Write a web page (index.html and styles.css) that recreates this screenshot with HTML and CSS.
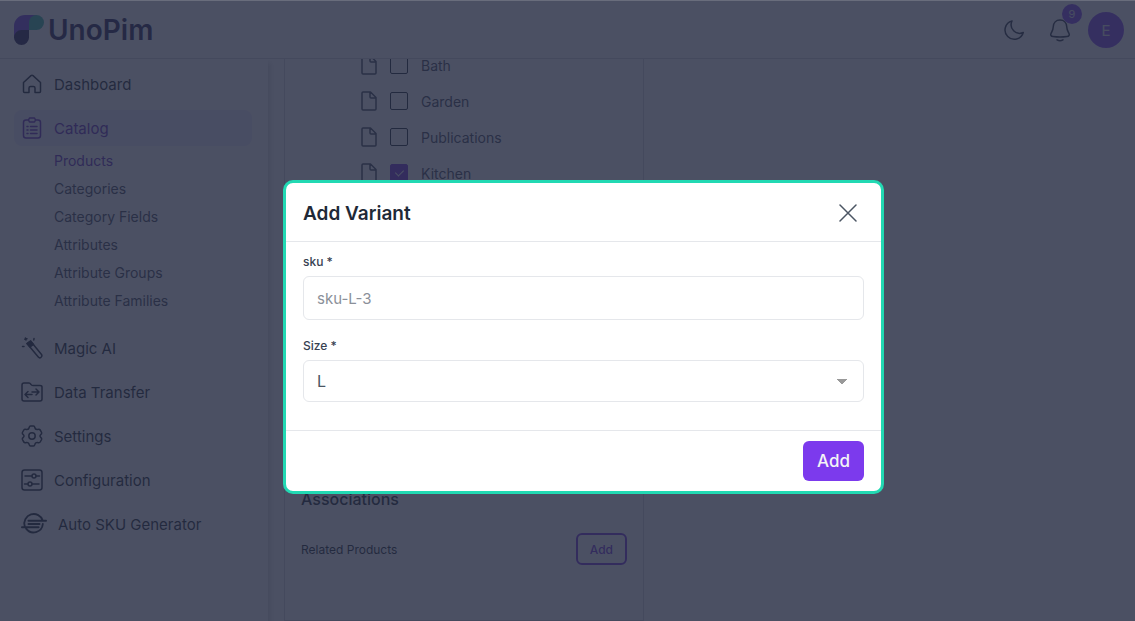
FILE: index.html
```html
<!DOCTYPE html>
<html lang="en">
<head>
  <meta charset="UTF-8" />
  <meta name="viewport" content="width=device-width, initial-scale=1" />
  <title>UnoPim</title>
  <link rel="stylesheet" href="styles.css">
</head>
<body>
  <!-- Header -->
  <header class="header">
    <a href="#" class="logo">
      <svg width="31" height="31" viewBox="0 0 31 31">
        <path d="M0 23V11A11 11 0 0 1 11 0H23V15H15V23Z" fill="#7038e0"/>
        <path d="M15 15V7.500A7.500 7.500 0 0 1 30 7.500A7.500 7.500 0 0 1 22.500 15Z" fill="#2bb3a0"/>
        <path d="M15 15V22.500A7.500 7.500 0 0 1 0 22.500A7.500 7.500 0 0 1 7.500 15Z" fill="#1b1248"/>
      </svg>
      <span class="logo-text">UnoPim</span>
    </a>
    <div class="header-actions">
      <button type="button" class="icon-button" aria-label="Dark mode">
        <svg width="24" height="24" viewBox="0 0 24 24"><path d="M10 3A9.300 9.300 0 1 0 21.300 14.500A8.600 8.600 0 0 1 10 3Z"/></svg>
      </button>
      <button type="button" class="icon-button" aria-label="Notifications">
        <svg width="24" height="24" viewBox="0 0 24 24"><path d="M12 2C7.800 2 5.500 5 5.300 8.500C5.100 12 4.500 12.500 3 15.500C2.300 17 3 18.300 5 18.500Q12 19.500 19 18.500C21 18.300 21.700 17 21 15.500C19.500 12.500 18.900 12 18.700 8.500C18.500 5 16.200 2 12 2ZM9 21.800Q12 23.600 15 21.800"/></svg>
        <span class="badge">9</span>
      </button>
      <button type="button" class="avatar">E</button>
    </div>
  </header>

  <div class="page">
    <!-- Sidebar -->
    <nav class="sidebar">
      <a href="#" class="nav-item">
        <svg width="20" height="20" viewBox="0 0 20 20"><path d="M1.500 8.500L9 1.600Q10 .8 11 1.600L18.500 8.500V17.500Q18.500 18.500 17.500 18.500H13V14Q13 12.500 11.500 12.500H8.500Q7 12.500 7 14V18.500H2.500Q1.500 18.500 1.500 17.500Z"/></svg>
        Dashboard
      </a>
      <div class="nav-group">
        <a href="#" class="nav-item active">
          <svg width="20" height="22" viewBox="0 0 20 22"><path d="M6 3H4Q1.500 3 1.500 5.500V18.500Q1.500 21 4 21H16Q18.500 21 18.500 18.500V5.500Q18.500 3 16 3H14M7.500 1H12.500L13.500 3L12.500 5H7.500L6.500 3ZM5 9.500H6M8.500 9.500H15M5 13H6M8.500 13H15M5 16.500H6M8.500 16.500H15"/></svg>
          Catalog
        </a>
        <div class="submenu">
          <a href="#" class="active">Products</a>
          <a href="#">Categories</a>
          <a href="#">Category Fields</a>
          <a href="#">Attributes</a>
          <a href="#">Attribute Groups</a>
          <a href="#">Attribute Families</a>
        </div>
      </div>
      <a href="#" class="nav-item">
        <svg width="20" height="22" viewBox="0 0 20 22"><path d="M5 6.500L8.500 4L19.500 17.500Q20.500 19 19 20.300Q17.500 21.500 16.300 20Z"/><path class="solid" d="M5 6.500L8.500 4L11.500 7.500L8 10Z"/><path d="M3.500 1L4 3M2.800 2.200L5 1.700M12 1.500L11.800 3M.5 9.500H2"/></svg>
        Magic AI
      </a>
      <a href="#" class="nav-item">
        <svg width="22" height="20" viewBox="0 0 22 20"><path d="M1 3Q1 1 3 1H8Q9 1 10 2.500Q10.500 3.500 12 3.500H19Q21 3.500 21 5V17Q21 19 19 19H3Q1 19 1 17ZM4 12.500H11M7 9.500L4 12.500L7 15.500M11 10H18M15 7L18 10L15 13"/></svg>
        Data Transfer
      </a>
      <a href="#" class="nav-item">
        <svg width="22" height="22" viewBox="0 0 22 22"><circle cx="11" cy="11" r="3.200"/><path d="M9.500 1H12.500Q13.500 1 13.800 2.500Q14.200 4.800 16.500 4.500Q18.500 3.800 19.200 5L20.600 7.500Q21 8.800 19.800 9.500Q18.200 11 19.800 12.500Q21 13.200 20.600 14.500L19.200 17Q18.500 18.200 16.500 17.500Q14.200 17.200 13.800 19.500Q13.500 21 12.500 21H9.500Q8.500 21 8.200 19.500Q7.800 17.200 5.500 17.500Q3.500 18.200 2.800 17L1.400 14.500Q1 13.200 2.200 12.500Q3.800 11 2.200 9.500Q1 8.800 1.400 7.500L2.800 5Q3.500 3.800 5.500 4.500Q7.800 4.800 8.200 2.500Q8.500 1 9.500 1Z"/></svg>
        Settings
      </a>
      <a href="#" class="nav-item">
        <svg width="22" height="22" viewBox="0 0 22 22"><rect x="1" y="1" width="20" height="20" rx="2.500"/><circle cx="13" cy="7" r="2"/><circle cx="9" cy="15" r="2"/><path d="M4 7H11M15 7H18.500M3.500 15H7M11 15H18"/></svg>
        Configuration
      </a>
      <a href="#" class="nav-item">
        <svg class="bold" width="26" height="24" viewBox="0 0 28 24"><path d="M4 14.500A10 10 0 1 1 23.500 8.500M23.500 12A10 10 0 0 1 5.500 17M8 8.500H27M8 12H20M1 15.500H19"/></svg>
        Auto SKU Generator
      </a>
    </nav>

    <!-- Product edit -->
    <main class="content">
      <section class="panel">
        <ul class="tree">
          <li>
            <svg width="16" height="20" viewBox="0 0 16 20"><path d="M1 2Q1 1 2 1H9.500L15 6.500V18Q15 19 14 19H2Q1 19 1 18ZM9 1V6Q9 7 10 7H15"/></svg>
            <label><input type="checkbox"> Bath</label>
          </li>
          <li>
            <svg width="16" height="20" viewBox="0 0 16 20"><path d="M1 2Q1 1 2 1H9.500L15 6.500V18Q15 19 14 19H2Q1 19 1 18ZM9 1V6Q9 7 10 7H15"/></svg>
            <label><input type="checkbox"> Garden</label>
          </li>
          <li>
            <svg width="16" height="20" viewBox="0 0 16 20"><path d="M1 2Q1 1 2 1H9.500L15 6.500V18Q15 19 14 19H2Q1 19 1 18ZM9 1V6Q9 7 10 7H15"/></svg>
            <label><input type="checkbox"> Publications</label>
          </li>
          <li>
            <svg width="16" height="20" viewBox="0 0 16 20"><path d="M1 2Q1 1 2 1H9.500L15 6.500V18Q15 19 14 19H2Q1 19 1 18ZM9 1V6Q9 7 10 7H15"/></svg>
            <label><input type="checkbox" checked> Kitchen</label>
          </li>
        </ul>
      </section>
      <section class="panel associations">
        <h3>Associations</h3>
        <div class="association">
          <span>Related Products</span>
          <button type="button" class="secondary-button">Add</button>
        </div>
      </section>
    </main>
  </div>

  <!-- Add Variant modal -->
  <div class="overlay">
    <form class="modal" role="dialog" aria-labelledby="modalTitle">
      <div class="modal-header">
        <h2 id="modalTitle">Add Variant</h2>
        <button type="button" class="close-button" aria-label="Close">
          <svg width="18" height="18" viewBox="0 0 18 18"><path d="M1 1L17 17M17 1L1 17"/></svg>
        </button>
      </div>
      <div class="modal-body">
        <div class="field">
          <label for="sku">sku *</label>
          <input type="text" id="sku" name="sku" value="sku-L-3" required />
        </div>
        <div class="field">
          <label for="size">Size *</label>
          <select id="size" name="size" required>
            <option>L</option>
          </select>
        </div>
      </div>
      <div class="modal-footer">
        <button type="submit" class="primary-button">Add</button>
      </div>
    </form>
  </div>
</body>
</html>
```
FILE: styles.css
```css
* {
  box-sizing: border-box;
}

body {
  margin: 0;
  height: 100vh;
  display: flex;
  flex-direction: column;
  overflow: hidden;
  font-family: Inter, sans-serif;
  font-size: 14px;
  color: #374151;
  background: white;
}

a {
  color: inherit;
  text-decoration: none;
}

button {
  font-family: inherit;
  cursor: pointer;
}

svg {
  flex-shrink: 0;
  fill: none;
  stroke: currentColor;
  stroke-width: 1.5;
  stroke-linecap: round;
  stroke-linejoin: round;
}

svg .solid {
  fill: currentColor;
}

svg.bold {
  stroke-width: 2;
}

.header {
  display: flex;
  justify-content: space-between;
  align-items: center;
  height: 59px;
  flex-shrink: 0;
  padding: 2px 11px 0 14px;
  border-bottom: 1px solid #d1d5db;
  background: white;
  position: relative;
  z-index: 1;
}

.logo {
  display: flex;
  align-items: center;
  gap: 3px;
}

.logo svg {
  stroke: none;
}

.logo-text {
  font-size: 28px;
  line-height: 32px;
  font-weight: 600;
  color: #1b1248;
}

.header-actions {
  display: flex;
  align-items: center;
  gap: 16px;
}

.icon-button {
  position: relative;
  display: flex;
  padding: 0;
  margin-right: 6px;
  border: none;
  background: none;
  color: #1f2937;
}

.icon-button + .avatar {
  margin-left: -6px;
}

.badge {
  position: absolute;
  top: -14px;
  left: 14px;
  width: 20px;
  height: 20px;
  border-radius: 50%;
  background: #7c3aed;
  color: #e5e7eb;
  font-size: 11px;
  line-height: 20px;
}

.avatar {
  width: 36px;
  height: 36px;
  padding: 0;
  border: none;
  border-radius: 50%;
  background: #7c3aed;
  color: #e5e7eb;
  font-size: 15px;
}

.page {
  flex: 1;
  min-height: 0;
  display: flex;
}

.sidebar {
  width: 268px;
  flex-shrink: 0;
  display: flex;
  flex-direction: column;
  gap: 8px;
  padding: 7px 16px 8px 14px;
  box-shadow: 2px 4px 6px rgba(0, 0, 0, 0.2);
}

.nav-item {
  display: flex;
  align-items: center;
  gap: 11px;
  height: 36px;
  padding: 0 7px;
  border-radius: 8px;
  font-size: 15px;
  color: #111827;
}

.nav-item svg {
  min-width: 22px;
}

.nav-item.active {
  background: #ede9fe;
  color: #5b21b6;
}

.submenu {
  display: flex;
  flex-direction: column;
  padding: 1px 0 7px 40px;
}

.submenu a {
  line-height: 28px;
}

.submenu a.active {
  color: #5b21b6;
}

/* scrolled to the end of the column */
.content {
  flex: 1;
  display: flex;
  flex-direction: column;
  justify-content: flex-end;
  gap: 8px;
  padding-left: 16px;
  overflow: hidden;
}

.panel {
  width: 360px;
  flex-shrink: 0;
  padding: 0 16px;
  border: 1px solid #d1d5db;
}

.tree {
  list-style: none;
  height: 427px;
  margin: 0;
  padding: 0 0 0 60px;
}

.tree li {
  display: flex;
  align-items: center;
  gap: 13px;
  height: 36px;
}

.tree label {
  display: flex;
  align-items: center;
  gap: 13px;
}

.tree input {
  appearance: none;
  width: 18px;
  height: 18px;
  margin: 0;
  border: 1px solid #111827;
  border-radius: 2px;
}

.tree input:checked {
  display: flex;
  justify-content: center;
  border-color: #6d28d9;
  background: #6d28d9;
}

.tree input:checked::before {
  content: "";
  width: 4px;
  height: 7px;
  margin-top: 3px;
  border: solid white;
  border-width: 0 1px 1px 0;
  transform: rotate(45deg);
}

.associations {
  height: 138px;
}

.associations h3 {
  margin: 3px 0 22px;
  font-size: 16px;
  line-height: 24px;
  font-weight: 500;
  color: #111827;
}

.association {
  display: flex;
  justify-content: space-between;
  align-items: center;
  font-size: 12px;
  color: #111827;
}

.secondary-button {
  height: 32px;
  padding: 0 12px;
  border: 2px solid #6d28d9;
  border-radius: 6px;
  background: white;
  color: #6d28d9;
  font-size: 12px;
  font-weight: 500;
}

.overlay {
  position: fixed;
  inset: 0;
  z-index: 2;
  display: flex;
  justify-content: center;
  align-items: center;
  padding: 52px 0 0 32px;
  border-top: 1px solid #696d7c;
  background: rgba(39, 45, 68, 0.835);
}

.modal {
  width: 601px;
  max-width: 100%;
  border: 3px solid #22d9b3;
  border-radius: 10px;
  background: white;
}

.modal-header {
  display: flex;
  justify-content: space-between;
  align-items: center;
  height: 59px;
  padding: 2px 24px 0 17px;
  border-bottom: 1px solid #e5e7eb;
}

.modal-header h2 {
  margin: 0;
  font-size: 19px;
  font-weight: 600;
  color: #1f2937;
}

.close-button {
  display: flex;
  padding: 0;
  border: none;
  background: none;
  color: #4b5563;
}

.modal-body {
  display: flex;
  flex-direction: column;
  gap: 17px;
  padding: 11px 17px 28px;
}

.field {
  display: flex;
  flex-direction: column;
  gap: 5px;
}

.field label {
  font-size: 12px;
  line-height: 18px;
  font-weight: 500;
  color: #374151;
}

.field input,
.field select {
  width: 100%;
  height: 44px;
  padding: 0 13px;
  border: 1px solid #e5e7eb;
  border-radius: 6px;
  background: white;
  font-family: inherit;
  font-size: 15px;
  color: #8b9099;
}

.field select {
  appearance: none;
  height: 42px;
  font-size: 16px;
  color: #4b5563;
  background: linear-gradient(to bottom right, #999 50%, transparent 51%) right 16px center / 5px 5px no-repeat,
    linear-gradient(to bottom left, #999 50%, transparent 51%) right 21px center / 5px 5px no-repeat, white;
}

.modal-footer {
  display: flex;
  justify-content: flex-end;
  padding: 10px 17px;
  border-top: 1px solid #e5e7eb;
}

.primary-button {
  height: 40px;
  padding: 0 14px;
  border: none;
  border-radius: 6px;
  background: #7c3aed;
  color: #f3f4f6;
  font-size: 17px;
  font-weight: 500;
}
```
